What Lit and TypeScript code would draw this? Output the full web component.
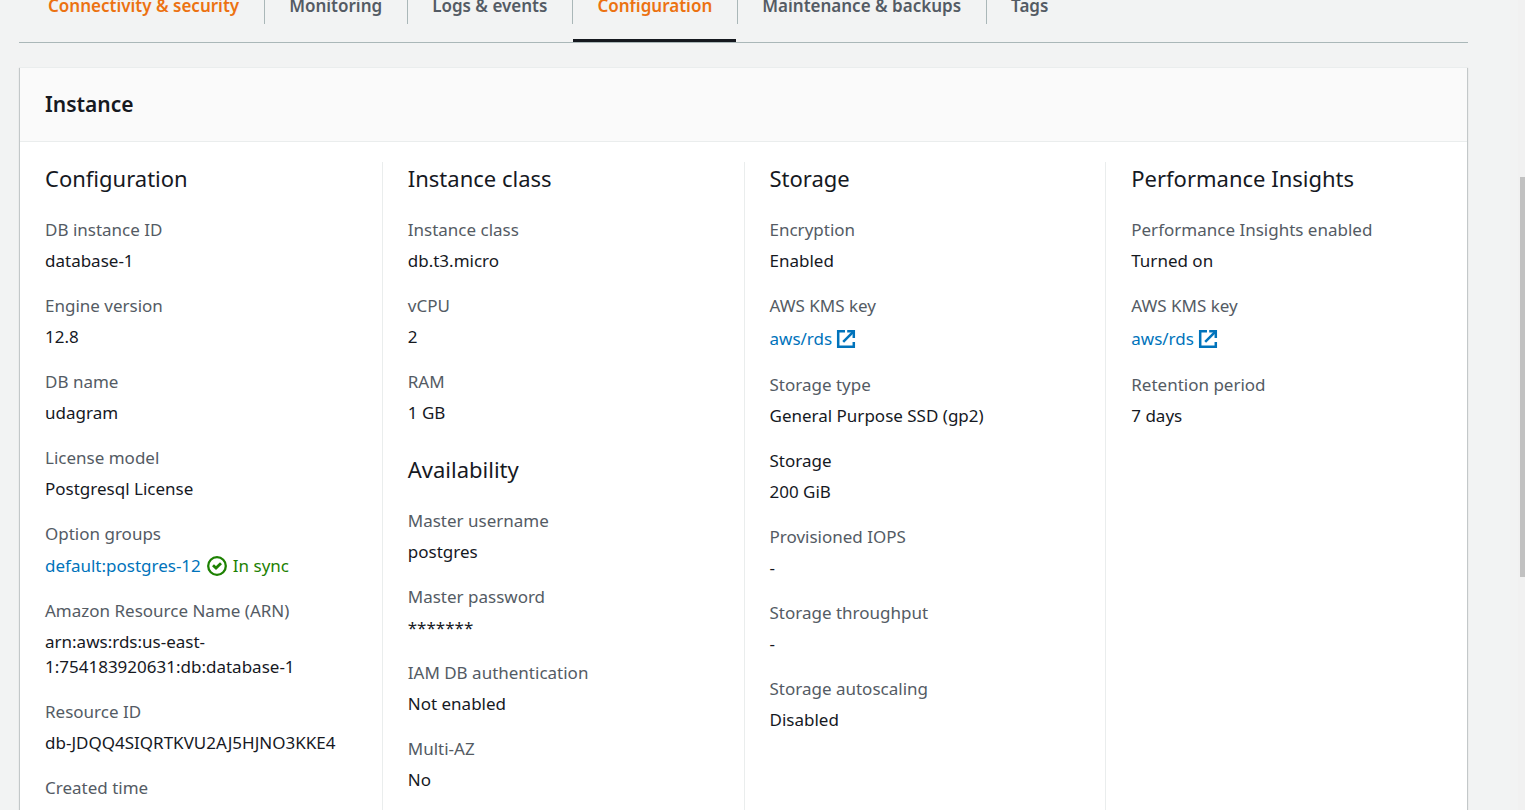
import { LitElement, html, css, svg, nothing } from "lit";
import { customElement, property } from "lit/decorators.js";
import { classMap } from "lit/directives/class-map.js";

type Kind = "text" | "external" | "status";

interface Field {
  label: string;
  value?: string;
  kind?: Kind;
  status?: string;
  strong?: boolean;
}

interface Group {
  title: string;
  fields: Field[];
}

interface Tab {
  label: string;
  accent?: boolean;
  active?: boolean;
}

const TABS: Tab[] = [
  { label: "Connectivity & security", accent: true },
  { label: "Monitoring" },
  { label: "Logs & events" },
  { label: "Configuration", accent: true, active: true },
  { label: "Maintenance & backups" },
  { label: "Tags" },
];

const COLUMNS: Group[][] = [
  [
    {
      title: "Configuration",
      fields: [
        { label: "DB instance ID", value: "database-1" },
        { label: "Engine version", value: "12.8" },
        { label: "DB name", value: "udagram" },
        { label: "License model", value: "Postgresql License" },
        { label: "Option groups", value: "default:postgres-12", kind: "status", status: "In sync" },
        { label: "Amazon Resource Name (ARN)", value: "arn:aws:rds:us-east-1:754183920631:db:database-1" },
        { label: "Resource ID", value: "db-JDQQ4SIQRTKVU2AJ5HJNO3KKE4" },
        { label: "Created time" },
      ],
    },
  ],
  [
    {
      title: "Instance class",
      fields: [
        { label: "Instance class", value: "db.t3.micro" },
        { label: "vCPU", value: "2" },
        { label: "RAM", value: "1 GB" },
      ],
    },
    {
      title: "Availability",
      fields: [
        { label: "Master username", value: "postgres" },
        { label: "Master password", value: "*******" },
        { label: "IAM DB authentication", value: "Not enabled" },
        { label: "Multi-AZ", value: "No" },
      ],
    },
  ],
  [
    {
      title: "Storage",
      fields: [
        { label: "Encryption", value: "Enabled" },
        { label: "AWS KMS key", value: "aws/rds", kind: "external" },
        { label: "Storage type", value: "General Purpose SSD (gp2)" },
        { label: "Storage", value: "200 GiB", strong: true },
        { label: "Provisioned IOPS", value: "-" },
        { label: "Storage throughput", value: "-" },
        { label: "Storage autoscaling", value: "Disabled" },
      ],
    },
  ],
  [
    {
      title: "Performance Insights",
      fields: [
        { label: "Performance Insights enabled", value: "Turned on" },
        { label: "AWS KMS key", value: "aws/rds", kind: "external" },
        { label: "Retention period", value: "7 days" },
      ],
    },
  ],
];

const externalIcon = html`<svg class="icon" viewBox="0 0 20 20" width="20" height="20" aria-hidden="true">
  ${svg`<g fill="none" stroke="currentColor" stroke-width="2.5">
    <path d="M9 2.2H2.2V17.8H17.8V13"/>
    <path d="M11.2 2.2H17.8V9"/>
    <path d="M17.4 2.6L7.2 12.8"/>
  </g>`}
</svg>`;

const checkIcon = html`<svg class="icon" viewBox="0 0 20 20" width="20" height="20" aria-hidden="true">
  ${svg`<g fill="none" stroke="currentColor" stroke-width="2.3">
    <circle cx="10" cy="10" r="8.8"/>
    <path stroke-width="2.8" d="M6 9.2L9 12L14 7.2"/>
  </g>`}
</svg>`;

@customElement("tab-bar")
class TabBar extends LitElement {
  static styles = css`
    :host {
      display: block;
    }
    .tabs {
      display: flex;
      padding-left: 4px;
      border-bottom: 1px solid #aab7b8;
    }
    .cell {
      display: flex;
      flex-direction: column;
      padding: 0 1px;
    }
    .cell + .cell {
      background: linear-gradient(#aab7b8, #aab7b8) left top / 1px 32px no-repeat;
    }
    .tab {
      height: 50px;
      padding: 0 24px 19px;
      border: 0;
      border-bottom: 3px solid transparent;
      background: none;
      color: #545b64;
      font: 600 17px/28px "Noto Sans", "Open Sans", sans-serif;
      white-space: nowrap;
      cursor: pointer;
    }
    .accent {
      color: #ec7211;
    }
    .active {
      border-bottom-color: #16191f;
    }
  `;

  render() {
    return html`<div class="tabs" role="tablist">
      ${TABS.map(
        (t) => html`<div class="cell" role="presentation">
          <button
            role="tab"
            aria-selected=${t.active ? "true" : "false"}
            class=${classMap({ tab: true, accent: !!t.accent, active: !!t.active })}
          >${t.label}</button>
        </div>`,
      )}
    </div>`;
  }
}

@customElement("field-group")
class FieldGroup extends LitElement {
  @property({ attribute: false }) group!: Group;

  static styles = css`
    :host {
      display: block;
    }
    .title {
      margin: 0 0 22px;
      font-size: 22px;
      line-height: 33px;
      font-weight: 400;
    }
    .list {
      display: flex;
      flex-direction: column;
      gap: 20px;
      margin: 0;
    }
    .field {
      display: flex;
      flex-direction: column;
      gap: 6px;
    }
    .label {
      color: #545b64;
    }
    .strong {
      color: #16191f;
    }
    .value {
      margin: 0;
      overflow-wrap: break-word;
    }
    .row {
      display: flex;
      align-items: center;
      gap: 6px;
      min-height: 26px;
    }
    .external {
      min-height: 28px;
    }
    .link {
      display: inline-flex;
      align-items: center;
      gap: 4px;
      color: #0073bb;
      text-decoration: none;
    }
    .status {
      display: inline-flex;
      align-items: center;
      gap: 6px;
      color: #1d8102;
    }
    .icon {
      display: block;
      flex: none;
      padding-top: 1px;
    }
  `;

  private value(f: Field) {
    if (f.value === undefined) return nothing;
    if (f.kind === "external") {
      return html`<dd class="value row external"><a class="link" href="#">${f.value}${externalIcon}</a></dd>`;
    }
    if (f.kind === "status") {
      return html`<dd class="value row">
        <a class="link" href="#">${f.value}</a><span class="status">${checkIcon}${f.status}</span>
      </dd>`;
    }
    return html`<dd class="value">${f.value}</dd>`;
  }

  render() {
    return html`<h3 class="title">${this.group.title}</h3>
      <dl class="list">
        ${this.group.fields.map(
          (f) => html`<div class="field">
            <dt class=${classMap({ label: true, strong: !!f.strong })}>${f.label}</dt>
            ${this.value(f)}
          </div>`,
        )}
      </dl>`;
  }
}

@customElement("app-root")
class AppRoot extends LitElement {
  static styles = css`
    :host {
      display: flex;
      height: 100vh;
      overflow: hidden;
      background: #f2f3f3;
      color: #16191f;
      font: 400 17px/25px "Noto Sans", "Open Sans", sans-serif;
    }
    .page {
      flex: 1;
      min-width: 0;
      display: flex;
      flex-direction: column;
      gap: 24px;
      padding: 0 50px 0 19px;
    }
    .nav {
      margin-top: -8px;
    }
    .card {
      flex: 1 0 auto;
      display: flex;
      flex-direction: column;
      margin: 0 1px;
      background: #fff;
      border-top: 1px solid #eaeded;
      box-shadow: 0 1px 1px 0 rgba(0, 28, 36, 0.3), 1px 1px 1px 0 rgba(0, 28, 36, 0.15),
        -1px 1px 1px 0 rgba(0, 28, 36, 0.15);
    }
    .head {
      padding: 22px 25px;
      background: #fafafa;
      border-bottom: 1px solid #eaeded;
    }
    .heading {
      margin: 0;
      font-size: 21px;
      line-height: 29px;
      font-weight: 600;
    }
    .columns {
      flex: 1;
      display: grid;
      grid-template-columns: repeat(4, minmax(0, 1fr));
      padding-top: 20px;
    }
    .column {
      display: flex;
      flex-direction: column;
      gap: 28px;
      padding: 0 5px 0 25px;
    }
    .column + .column {
      border-left: 1px solid #eaeded;
    }
    .rail {
      flex: none;
      width: 5px;
      padding: 177px 0 0 2px;
      background: #f1f1f1;
    }
    .thumb {
      height: 400px;
      background: #c1c1c1;
    }
  `;

  render() {
    return html`<main class="page">
        <tab-bar class="nav"></tab-bar>
        <section class="card" aria-labelledby="instance">
          <header class="head"><h2 class="heading" id="instance">Instance</h2></header>
          <div class="columns">
            ${COLUMNS.map(
              (groups) => html`<div class="column">
                ${groups.map((g) => html`<field-group .group=${g}></field-group>`)}
              </div>`,
            )}
          </div>
        </section>
      </main>
      <div class="rail" aria-hidden="true"><div class="thumb"></div></div>`;
  }
}
